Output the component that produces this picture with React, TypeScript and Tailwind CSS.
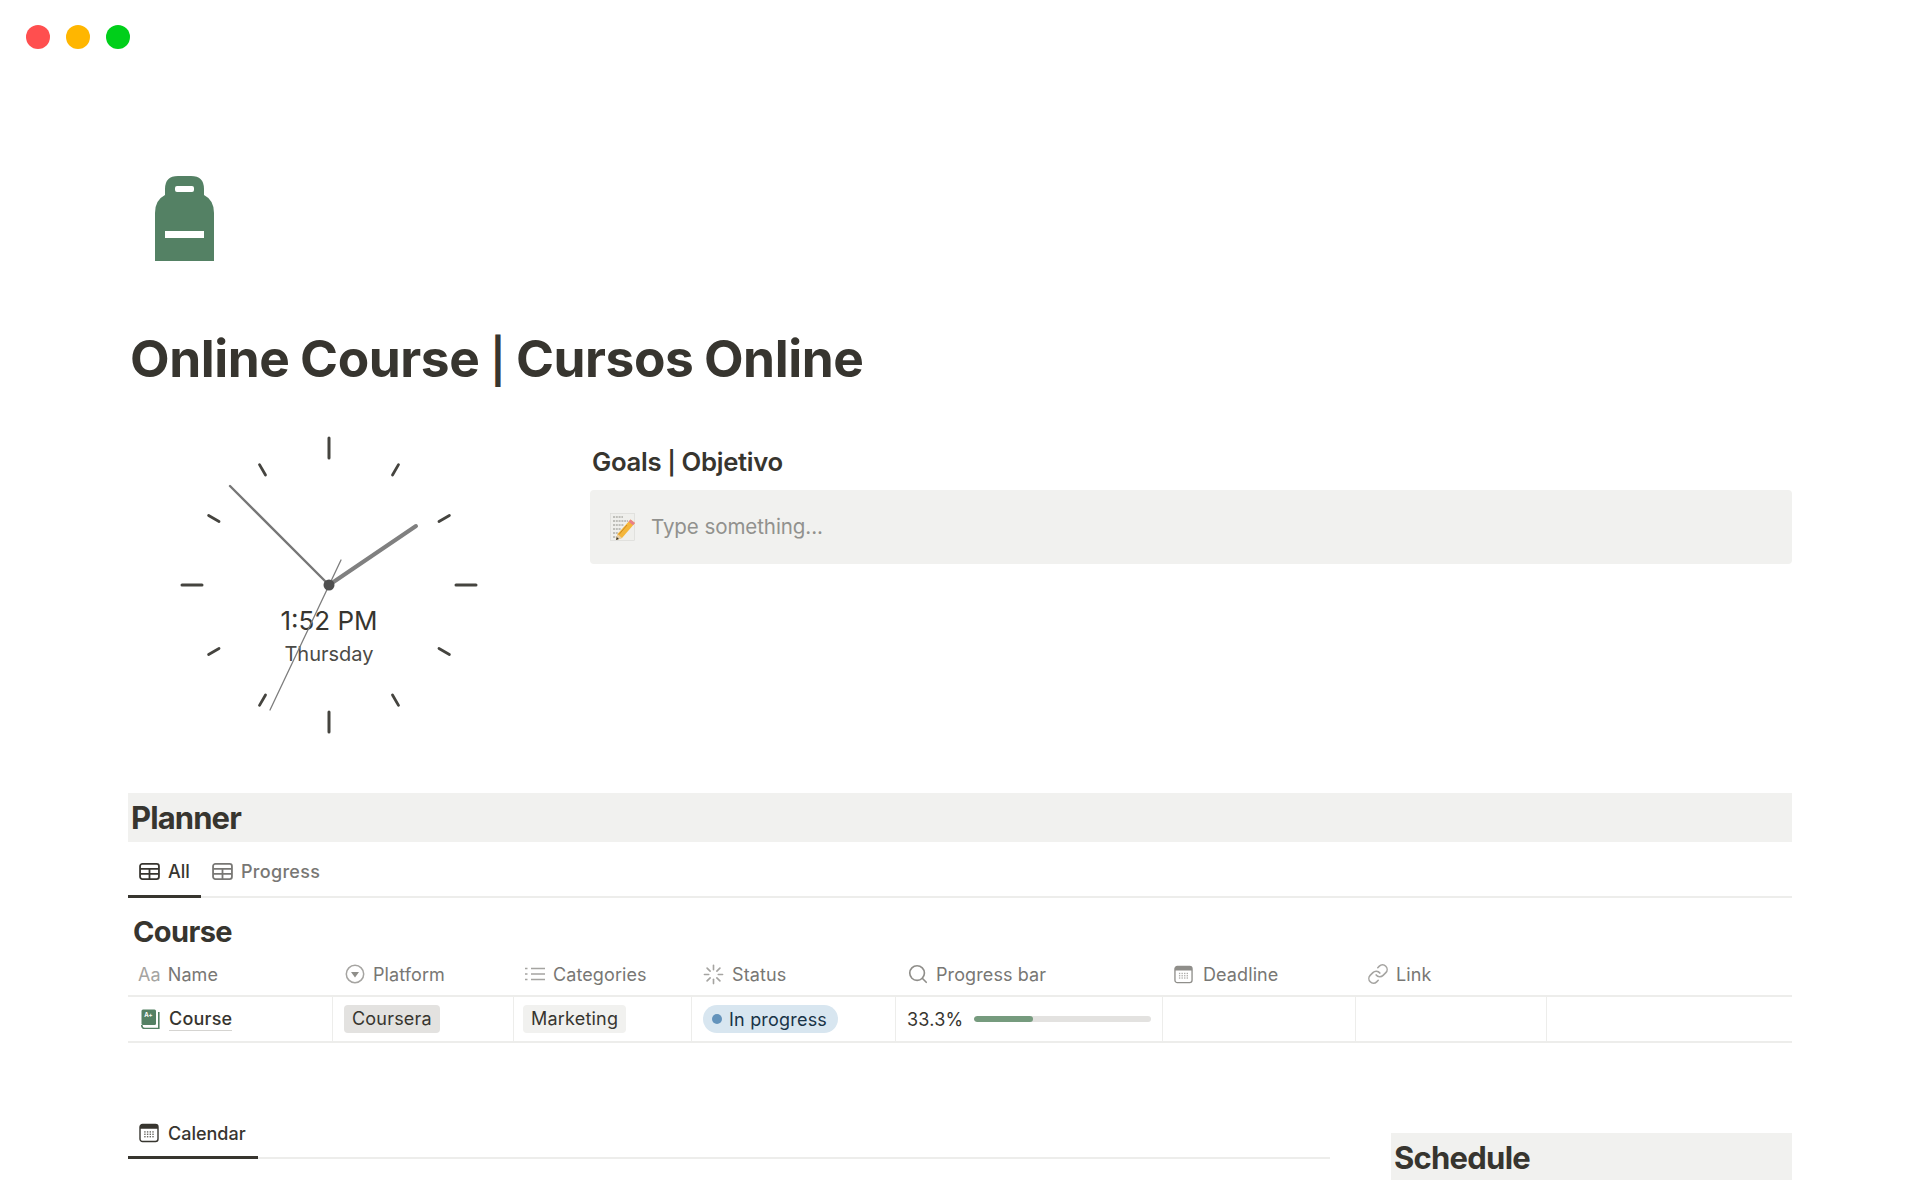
import React from "react";
import { Link, Search } from "lucide-react";

function TableIcon({ className }: { className: string }) {
  return (
    <svg viewBox="0 0 22 18" className={className} fill="none" stroke="currentColor" strokeWidth="1.9">
      <rect x="1" y="1" width="20" height="16" rx="2.5" />
      <path d="M1 6.2H21M1 11.6H21M11 6.2V17" />
    </svg>
  );
}

function CalendarIcon({ className, dark }: { className: string; dark?: boolean }) {
  const color = dark ? "#37352f" : "#8f8e8a";
  const dots = [];
  for (let r = 0; r < 3; r++) {
    for (let c = 0; c < 4; c++) {
      dots.push(<rect key={`${r}-${c}`} x={5.2 + c * 2.7} y={8.2 + r * 2.4} width="1.4" height="1.4" fill={color} opacity="0.75" />);
    }
  }
  return (
    <svg viewBox="0 0 20 20" className={className} fill="none">
      <rect x="1" y="1.5" width="18" height="17" rx="2.5" stroke={color} strokeWidth="1.4" />
      <path d="M1 4a2.500 2.500 0 0 1 2.500-2.500h13A2.500 2.500 0 0 1 19 4v1.800H1z" fill={color} />
      {dots}
    </svg>
  );
}

function SpinnerIcon() {
  const ticks = [0, 45, 90, 135, 180, 225, 270, 315];
  return (
    <svg viewBox="0 0 22 22" className="w-[21px] h-[21px]" stroke="#a5a4a1" strokeWidth="1.7" strokeLinecap="round">
      {ticks.map((a) => (
        <line key={a} x1="11" y1="1.5" x2="11" y2="6" transform={`rotate(${a} 11 11)`} />
      ))}
    </svg>
  );
}

function NoteEmoji() {
  return (
    <svg viewBox="0 0 26 28" className="w-[26px] h-[28px]">
      <rect x="0.500" y="0.500" width="24" height="27" fill="#efefec" stroke="#d8d8d4" strokeWidth="0.6" />
      <path d="M3 4h10M3 8h15M3 12h11M3 16h8M3 20h5M3 24h5" stroke="#77776f" strokeWidth="0.8" strokeDasharray="2 0.8" />
      <path d="M20.500 6.500 25 10 12 25l-6 2 1.500-6z" fill="#f4b63a" />
      <path d="M20.500 6.500 25 10l-2 2.300-4.500-3.500z" fill="#e8808a" />
      <path d="M7.500 21 6 27l6-2z" fill="#e7cfa6" />
      <path d="M6.800 24 6 27l3-1z" fill="#37352f" />
      <path d="M17 12 9 21.500" stroke="#cf8a1f" strokeWidth="1" />
    </svg>
  );
}

function CourseIcon() {
  return (
    <svg viewBox="0 0 19 20" className="w-[19px] h-[20px]">
      <rect x="0.500" y="0.500" width="14.500" height="15.500" rx="1.500" fill="#548164" />
      <path d="M0.800 16v0.500a3 3 0 0 0 3 3h14V3" fill="none" stroke="#548164" strokeWidth="1.600" />
      <text x="7.500" y="7.500" fontSize="6" fontWeight="700" fill="#fff" textAnchor="middle" fontFamily="Inter, sans-serif">A+</text>
    </svg>
  );
}

function Backpack() {
  return (
    <svg viewBox="0 0 59 85" className="w-[59px] h-[85px]">
      <path
        fillRule="evenodd"
        fill="#548164"
        d="M10 19V13Q10 0 23 0H36Q49 0 49 13V19Q59 24 59 37V85H0V37Q0 24 10 19ZM22 10Q20 10 20 12V14Q20 16 22 16H37Q39 16 39 14V12Q39 10 37 10ZM10 55V62H49V55Z"
      />
    </svg>
  );
}

function Clock() {
  const ticks = [0, 30, 60, 90, 120, 150, 180, 210, 240, 270, 300, 330];
  return (
    <div className="relative w-[340px] h-[340px] ml-[31px] shrink-0">
      <div className="absolute left-0 right-0 top-[190px] text-center text-[26px] leading-[32px] text-[#37352f]">1:52 PM</div>
      <div className="absolute left-0 right-0 top-[226px] text-center text-[20px] leading-[26px] text-[#4b4a46]">Thursday</div>
      <svg viewBox="-170 -170 340 340" className="absolute inset-0 w-[340px] h-[340px]" fill="none" strokeLinecap="round">
        {ticks.map((a) => (
          <line
            key={a}
            x1="0"
            y1="-127"
            x2="0"
            y2={a % 90 === 0 ? -147 : -139}
            stroke="#45443f"
            strokeWidth={a % 90 === 0 ? 3 : 2.8}
            transform={`rotate(${a})`}
          />
        ))}
        <line x1="0" y1="0" x2="87" y2="-59" stroke="#808080" strokeWidth="4" />
        <line x1="0" y1="0" x2="-99" y2="-99" stroke="#777777" strokeWidth="2.4" />
        <line x1="12" y1="-25" x2="-59" y2="125" stroke="#7d7d7d" strokeWidth="1.3" />
        <circle cx="0" cy="0" r="5.500" fill="#4f4f4f" />
      </svg>
    </div>
  );
}

function HeaderCell({ width, icon, label, gap }: { width: string; icon: React.ReactNode; label: string; gap: string }) {
  return (
    <div className={`${width} ${gap} flex items-center shrink-0 pl-[12px]`}>
      {icon}
      <span>{label}</span>
    </div>
  );
}

export default function App() {
  return (
    <div className="w-[1920px] h-[1200px] overflow-hidden bg-white text-[#37352f] font-['Inter',sans-serif]">
      <div className="flex gap-[16px] pl-[26px] pt-[25px]">
        <div className="w-[24px] h-[24px] rounded-full bg-[#ff4f4f]" />
        <div className="w-[24px] h-[24px] rounded-full bg-[#ffb600]" />
        <div className="w-[24px] h-[24px] rounded-full bg-[#00cf1a]" />
      </div>

      <main className="ml-[128px] w-[1664px]">
        <div className="mt-[127px] ml-[27px] h-[85px]">
          <Backpack />
        </div>
        <h1 className="mt-[67px] pl-[2px] h-[61px] text-[51.400px] leading-[61px] font-bold tracking-[-0.42px] [word-spacing:-1.2px]">
          Online Course <span className="text-[44px] font-semibold">|</span> Cursos Online
        </h1>

        <section className="flex mt-[26px] h-[340px]">
          <div className="w-[462px] shrink-0">
            <Clock />
          </div>
          <div className="w-[1202px] pt-[30px]">
            <h3 className="pl-[2px] h-[34px] text-[25.700px] leading-[34px] font-semibold tracking-[-0.3px]">
              Goals <span className="text-[23px]">|</span> Objetivo
            </h3>
            <div className="mt-[11px] h-[74px] rounded-[4px] bg-[#f1f1ef] flex items-center pl-[20px] gap-[15px]">
              <NoteEmoji />
              <span className="text-[20.570px] text-[#91918e] tracking-[-0.1px]">Type something...</span>
            </div>
          </div>
        </section>

        <h2 className="mt-[38px] h-[49px] bg-[#f1f1ef] pl-[3px] text-[31px] leading-[50px] font-bold tracking-[-0.9px]">Planner</h2>

        <div className="flex h-[56px] border-b-2 border-[#ededeb] text-[18px] font-medium">
          <div className="flex items-center gap-[8px] w-[73px] pl-[11px] pt-[5px] h-[56px] border-b-[3px] border-[#37352f]">
            <TableIcon className="w-[21px] h-[17px] shrink-0" />
            <span>All</span>
          </div>
          <div className="flex items-center gap-[8px] pl-[11px] pt-[4px] h-[54px] text-[#787774] tracking-[0.3px]">
            <TableIcon className="w-[21px] h-[17px] shrink-0" />
            <span>Progress</span>
          </div>
        </div>

        <div className="mt-[16px] pl-[5px] text-[29px] leading-[36px] font-bold tracking-[-0.6px]">Course</div>

        <div className="flex h-[47px] pt-[3px] text-[18px] text-[#787774] border-b-2 border-[#ededeb] tracking-[0.1px]">
          <div className="w-[204px] flex items-center shrink-0 pl-[10px] gap-[7px]">
            <span className="text-[#a5a4a1]">Aa</span>
            <span>Name</span>
          </div>
          <HeaderCell
            width="w-[181px]"
            gap="gap-[8px]"
            label="Platform"
            icon={
              <svg viewBox="0 0 20 20" className="w-[20px] h-[20px] ml-[1px]" fill="none">
                <circle cx="10" cy="10" r="8.700" stroke="#a5a4a1" strokeWidth="1.500" />
                <path d="M6 8h8l-4 5.500z" fill="#8f8e8a" />
              </svg>
            }
          />
          <HeaderCell
            width="w-[178px]"
            gap="gap-[8px]"
            label="Categories"
            icon={
              <svg viewBox="0 0 20 16" className="w-[20px] h-[16px]" stroke="#a5a4a1" strokeWidth="1.500" fill="none">
                <path d="M6 2.500H20M6 8H20M6 13.500H20M0 2.500H2.500M0 8H2.500M0 13.500H2.500" />
              </svg>
            }
          />
          <HeaderCell width="w-[204px]" gap="gap-[8px]" label="Status" icon={<SpinnerIcon />} />
          <HeaderCell
            width="w-[267px]"
            gap="gap-[7px]"
            label="Progress bar"
            icon={<Search className="w-[22px] h-[22px] text-[#8f8e8a]" strokeWidth={1.8} />}
          />
          <HeaderCell
            width="w-[193px]"
            gap="gap-[10px]"
            label="Deadline"
            icon={<CalendarIcon className="w-[19px] h-[19px]" />}
          />
          <HeaderCell
            width="w-[191px]"
            gap="gap-[7px]"
            label="Link"
            icon={<Link className="w-[22px] h-[22px] text-[#a5a4a1]" strokeWidth={1.7} />}
          />
        </div>

        <div className="flex h-[46px] text-[18px] border-b-2 border-[#ededeb] tracking-[0.2px]">
          <div className="w-[205px] shrink-0 flex items-center pl-[13px] gap-[9px] border-r border-[#ededeb]">
            <CourseIcon />
            <span className="font-medium leading-[23px] border-b border-[#d5d4d1]">Course</span>
          </div>
          <div className="w-[181px] shrink-0 flex items-center pl-[11px] border-r border-[#ededeb]">
            <span className="h-[28px] leading-[28px] px-[8px] rounded-[4px] bg-[#e3e2e0]">Coursera</span>
          </div>
          <div className="w-[178px] shrink-0 flex items-center pl-[9px] border-r border-[#ededeb]">
            <span className="h-[28px] leading-[28px] px-[8px] rounded-[4px] bg-[#f1f1ef]">Marketing</span>
          </div>
          <div className="w-[204px] shrink-0 flex items-center pl-[11px] border-r border-[#ededeb]">
            <span className="h-[28px] pl-[9px] pr-[11px] rounded-full bg-[#d8e6f0] text-[#183347] flex items-center gap-[7px]">
              <span className="w-[10px] h-[10px] rounded-full bg-[#6393bb]" />
              <span>In progress</span>
            </span>
          </div>
          <div className="w-[267px] shrink-0 flex items-center pl-[11px] gap-[11px] border-r border-[#ededeb]">
            <span>33.3%</span>
            <div className="w-[177px] h-[6px] rounded-full bg-[#e3e2e0] overflow-hidden">
              <div className="w-[59px] h-[6px] rounded-full bg-[#769b7e]" />
            </div>
          </div>
          <div className="w-[193px] shrink-0 border-r border-[#ededeb]" />
          <div className="w-[191px] shrink-0 border-r border-[#ededeb]" />
        </div>

        <section className="flex justify-between mt-[62px]">
          <div className="w-[1202px] h-[54px] flex border-b-2 border-[#ededeb] text-[18px] font-medium">
            <div className="flex items-center gap-[9px] w-[130px] pl-[11px] pt-[5px] h-[54px] border-b-[3px] border-[#37352f]">
              <CalendarIcon dark className="w-[20px] h-[20px] shrink-0" />
              <span>Calendar</span>
            </div>
          </div>
          <h2 className="w-[401px] mt-[28px] h-[47px] bg-[#f1f1ef] pl-[3px] text-[31px] leading-[50px] font-bold tracking-[-0.75px]">Schedule</h2>
        </section>
      </main>
    </div>
  );
}
